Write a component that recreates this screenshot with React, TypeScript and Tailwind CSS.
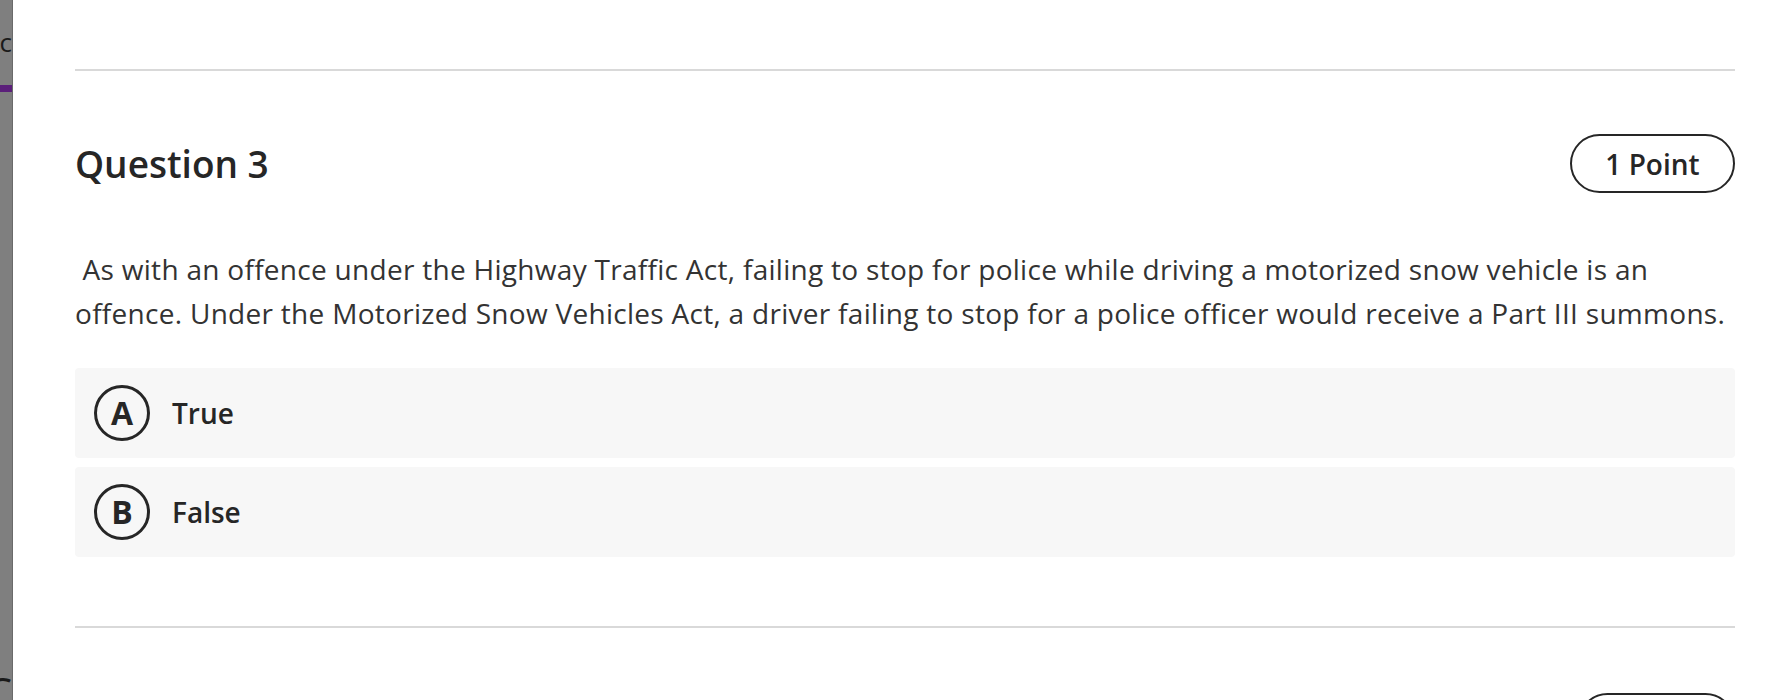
const options = [
  { key: "A", label: "True" },
  { key: "B", label: "False" },
];

function Option({ letter, label }: { letter: string; label: string }) {
  return (
    <div className="flex h-[90px] items-center rounded-[4px] bg-[#f7f7f7] pl-[19px]">
      <div className="flex h-[56px] w-[56px] items-center justify-center rounded-full border-[3px] border-[#262626] text-[32px] font-bold text-[#262626]">
        {letter}
      </div>
      <span className="ml-[22px] text-[28px] font-semibold text-[#262626]">{label}</span>
    </div>
  );
}

export default function App() {
  return (
    <div className="flex h-[700px] w-full overflow-hidden bg-white font-['Open_Sans',sans-serif]">
      {/* dimmed sidebar edge */}
      <div className="relative flex w-[13px] shrink-0 flex-col overflow-hidden border-r border-[#6a6a6a] bg-[#7f7f7f]">
        <div className="mt-[27px] flex justify-end whitespace-nowrap text-[26px] leading-[30px] text-[#1a1a1a]">Sec</div>
        <div className="mt-[28px] h-[7px] w-full bg-[#5b1f7a]" />
        <div className="mt-auto mb-[-12px] flex justify-end whitespace-nowrap text-[40px] leading-[40px] text-[#1a1a1a]">C</div>
      </div>

      <div className="flex-1 pl-[62px] pr-[37px] pt-[69px]">
        <div className="h-[2px] bg-[#d9d9d9]" />

        <div className="mt-[63px] flex items-center justify-between">
          <h2 className="text-[37px] font-semibold text-[#262626]">Question 3</h2>
          <div className="flex h-[59px] w-[165px] items-center justify-center rounded-full border-2 border-[#262626] text-[28px] font-semibold text-[#262626]">
            1 Point
          </div>
        </div>

        <p className="mt-[54px] mr-[-30px] text-[28px] leading-[44px] tracking-[0.29px] text-[#333333]">
          {"\u00a0"}As with an offence under the Highway Traffic Act, failing to stop for police while driving a motorized snow vehicle is an
          <br />
          offence. Under the Motorized Snow Vehicles Act, a driver failing to stop for a police officer would receive a Part III summons.
        </p>

        <div className="mt-[33px] flex flex-col gap-[9px]">
          {options.map((o) => (
            <Option key={o.key} letter={o.key} label={o.label} />
          ))}
        </div>

        <div className="mt-[69px] h-[2px] bg-[#d9d9d9]" />

        <div className="mt-[65px] flex justify-end">
          <div className="h-[59px] w-[157px] rounded-full border-2 border-[#262626]" />
        </div>
      </div>
    </div>
  );
}
